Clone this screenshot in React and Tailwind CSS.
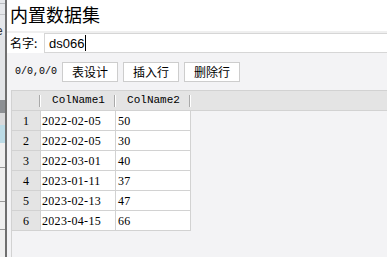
import React from "react";

const ROWS = [
  ["2022-02-05", "50"],
  ["2022-02-05", "30"],
  ["2022-03-01", "40"],
  ["2023-01-11", "37"],
  ["2023-02-13", "47"],
  ["2023-04-15", "66"],
];

const cjk = { fontFamily: '"Noto Sans CJK SC", "Noto Sans", sans-serif' };
const serif = { fontFamily: '"Liberation Serif", "Noto Sans CJK SC", serif' };
const mono = { fontFamily: '"Liberation Mono", monospace' };

// strip of the window lying behind, on the left edge
const BackWindow = () => (
  <div className="w-[5px] flex flex-col bg-[#e6e8eb] shrink-0">
    <div className="h-[4px] border-b border-[#b9bcc0]" />
    <div className="h-[11px] border-b border-[#c4c6c9]" />
    <div className="h-[21px] relative overflow-hidden text-[12px] leading-none text-[#333]">
      <span className="absolute left-[-4px] top-[10px]" style={{ fontFamily: '"Liberation Sans", sans-serif' }}>e</span>
    </div>
    <div className="h-[64px] bg-[#e2e4e7]" />
    <div className="h-[13px] bg-[#8c8f93]" />
    <div className="h-[12px] bg-[#d9dadc]" />
    <div className="h-[18px] bg-[#bcdbe6]" />
    <div className="h-[25px] border-b border-[#9a9a9a] bg-[#efefef]" />
    <div className="h-[34px] border-b border-[#9a9a9a] bg-[#efefef]" />
    <div className="h-[28px] border-b border-[#9a9a9a] bg-[#efefef]" />
    <div className="flex-1 bg-[#efefef]" />
  </div>
);

const ToolButton = ({ children }) => (
  <button
    className="w-[56px] h-[20px] bg-white border border-[#cdcdcd] text-[12px] leading-none text-black flex items-center justify-center"
    style={cjk}
  >
    {children}
  </button>
);

const HeaderCell = ({ w, children }) => (
  <div className={`${w} h-full relative flex items-center justify-center shrink-0`}>
    <span className="text-[11px] text-black" style={mono}>
      {children}
    </span>
    <div className="absolute right-0 top-[4px] bottom-[3px] w-[2px] border-l border-[#a9a9a9] bg-white" />
  </div>
);

export default function App() {
  return (
    <div className="w-[387px] h-[257px] flex overflow-hidden bg-white">
      <BackWindow />
      <div className="w-[2px] bg-[#6f6f6f] shrink-0" />
      <div className="flex-1 flex flex-col min-w-0">
        <div className="h-[31px] bg-white pl-[3px] flex items-center">
          <span className="text-[18px] leading-none text-black pb-[4px]" style={cjk}>
            内置数据集
          </span>
        </div>
        <div className="h-[22px] flex bg-white border-t-2 border-[#efefef]">
          <div className="w-[37px] pl-[3px] flex items-center text-[12px] text-black" style={cjk}>
            名字:
          </div>
          <div className="flex-1 border-y border-l border-[#d6d6d6] flex items-center pl-[4px]">
            <span className="text-[13px] text-black leading-none" style={{ fontFamily: '"Liberation Sans", sans-serif' }}>
              ds066
            </span>
            <span className="ml-[1px] w-px h-[16px] bg-black" />
          </div>
        </div>
        <div className="flex-1 bg-[#f3f3f5] flex flex-col">
          <div className="flex items-center pl-[8px] pt-[9px] h-[29px]">
            <span className="w-[47px] text-[10px] text-black leading-none" style={mono}>
              0/0,0/0
            </span>
            <div className="flex gap-[5px]">
              <ToolButton>表设计</ToolButton>
              <ToolButton>插入行</ToolButton>
              <ToolButton>删除行</ToolButton>
            </div>
          </div>
          <div className="mt-[8px] ml-[4px] flex-1 border-l border-t border-[#d2d2d2] flex flex-col">
            <div className="h-[20px] bg-[#e4e4e4] border-b border-[#d2d2d2] flex">
              <HeaderCell w="w-[29px]" />
              <HeaderCell w="w-[75px]">ColName1</HeaderCell>
              <HeaderCell w="w-[75px]">ColName2</HeaderCell>
            </div>
            {ROWS.map(([d, v], i) => (
              <div key={i} className="h-[20px] flex">
                <div
                  className="w-[29px] bg-[#e4e4e4] border-r border-b border-[#d2d2d2] flex items-center justify-center text-[12px] text-black"
                  style={serif}
                >
                  {i + 1}
                </div>
                <div
                  className="w-[75px] bg-white border-r border-b border-[#d2d2d2] flex items-center pl-[1px] text-[12px] tracking-[0.3px] text-black"
                  style={serif}
                >
                  {d}
                </div>
                <div
                  className="w-[75px] bg-white border-r border-b border-[#d2d2d2] flex items-center pl-[2px] text-[12px] tracking-[0.3px] text-black"
                  style={serif}
                >
                  {v}
                </div>
              </div>
            ))}
          </div>
        </div>
      </div>
    </div>
  );
}
